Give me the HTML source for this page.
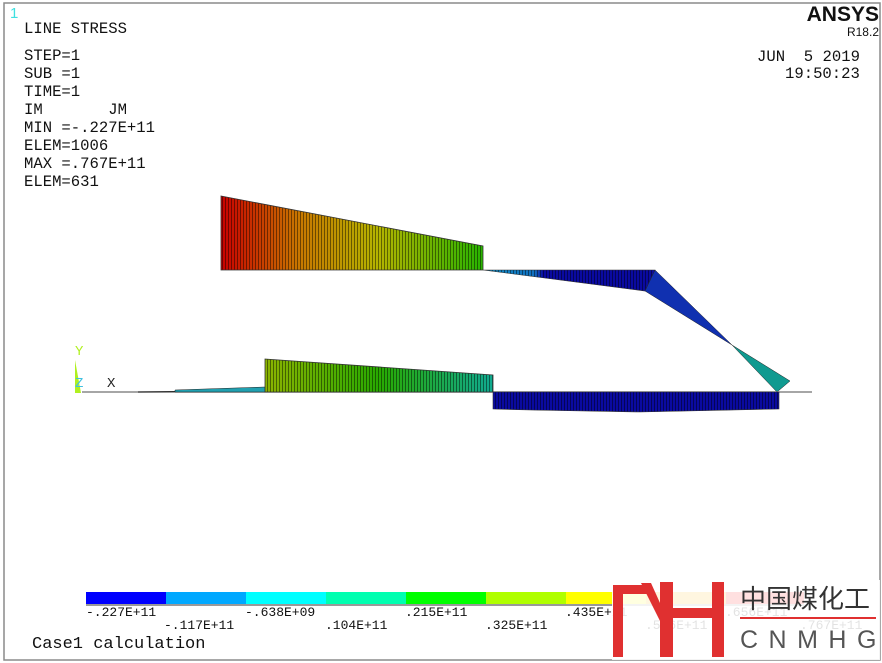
<!DOCTYPE html>
<html><head><meta charset="utf-8"><style>
html,body{margin:0;padding:0;background:#fff;width:882px;height:663px;overflow:hidden}
.m{font-family:"Liberation Mono",monospace;font-size:15.6px;fill:#111}
</style></head><body>
<svg width="882" height="663" viewBox="0 0 882 663" xmlns="http://www.w3.org/2000/svg">
<defs>
<linearGradient id="g1" x1="0" x2="1" y1="0" y2="0">
<stop offset="0" stop-color="#c80000"/><stop offset="0.3" stop-color="#c87800"/><stop offset="0.6" stop-color="#b4b400"/><stop offset="1" stop-color="#28b400"/></linearGradient>
<linearGradient id="g2" x1="0" x2="1"><stop offset="0" stop-color="#1090c8"/><stop offset="0.3" stop-color="#1070c0"/><stop offset="0.35" stop-color="#0a0aa0"/><stop offset="1" stop-color="#0a0aa0"/></linearGradient>
<linearGradient id="g3" x1="0" x2="1"><stop offset="0" stop-color="#8cb400"/><stop offset="0.5" stop-color="#28aa00"/><stop offset="1" stop-color="#10aa90"/></linearGradient>
<pattern id="st" width="3" height="10" patternUnits="userSpaceOnUse"><rect x="0" y="0" width="1" height="10" fill="#000" opacity="0.45"/></pattern>
</defs>
<rect x="4" y="3" width="876" height="657" fill="#fff" stroke="#8a8a8a" stroke-width="1.5"/>
<text x="10" y="18" font-family="Liberation Sans,sans-serif" font-size="15" fill="#40e0e0">1</text>
<g class="m">
<text x="24" y="33">LINE STRESS</text>
<text x="24" y="60">STEP=1</text>
<text x="24" y="78">SUB =1</text>
<text x="24" y="96">TIME=1</text>
<text x="24" y="114">IM&#160;&#160;&#160;&#160;&#160;&#160;&#160;JM</text>
<text x="24" y="132">MIN =-.227E+11</text>
<text x="24" y="150">ELEM=1006</text>
<text x="24" y="168">MAX =.767E+11</text>
<text x="24" y="186">ELEM=631</text>
<text x="757" y="61">JUN&#160;&#160;5 2019</text>
<text x="785" y="78">19:50:23</text>
</g>
<text x="879" y="21" text-anchor="end" font-family="Liberation Sans,sans-serif" font-weight="bold" font-size="21" fill="#111">ANSYS</text>
<text x="879" y="36" text-anchor="end" font-family="Liberation Sans,sans-serif" font-size="12" fill="#111">R18.2</text>
<polygon points="221,196 483,246 483,270 221,270" fill="url(#g1)"/>
<polygon points="221,196 483,246 483,270 221,270" fill="url(#st)" stroke="#333" stroke-width="0.8"/>
<polygon points="483,270 655,270 645,291" fill="url(#g2)"/>
<polygon points="483,270 655,270 645,291" fill="url(#st)" stroke="#333" stroke-width="0.6"/>
<polygon points="655,270 732,345 645,291" fill="#1030b0" stroke="#222" stroke-width="0.5"/>
<polygon points="732,345 790,381 777,392" fill="#109a90" stroke="#222" stroke-width="0.5"/>
<line x1="82" y1="392" x2="812" y2="392" stroke="#888" stroke-width="1.5"/>
<line x1="138" y1="392" x2="220" y2="391" stroke="#222" stroke-width="1"/>
<polygon points="175,392 175,390 265,387 265,392" fill="#20a0b0" stroke="#222" stroke-width="0.5"/>
<polygon points="265,359 493,375 493,392 265,392" fill="url(#g3)"/>
<polygon points="265,359 493,375 493,392 265,392" fill="url(#st)" stroke="#333" stroke-width="0.8"/>
<polygon points="493,392 779,392 779,409 640,412 530,410 493,409" fill="#0a0aa0"/>
<polygon points="493,392 779,392 779,409 640,412 530,410 493,409" fill="url(#st)" stroke="#333" stroke-width="0.6"/>
<polygon points="75,360 81,393 75,393" fill="#b0f020"/>
<text x="75" y="355" font-family="Liberation Mono,monospace" font-size="14" fill="#b0f020">Y</text>
<text x="75" y="387" font-family="Liberation Mono,monospace" font-size="14" fill="#40c0e0">Z</text>
<text x="107" y="387" font-family="Liberation Mono,monospace" font-size="14" fill="#222">X</text>
<g stroke="none">
<rect x="86" y="592" width="80" height="12" fill="#0000ff"/>
<rect x="166" y="592" width="80" height="12" fill="#00a8ff"/>
<rect x="246" y="592" width="80" height="12" fill="#00ffff"/>
<rect x="326" y="592" width="80" height="12" fill="#00ffb0"/>
<rect x="406" y="592" width="80" height="12" fill="#00ff00"/>
<rect x="486" y="592" width="80" height="12" fill="#b0ff00"/>
<rect x="566" y="592" width="80" height="12" fill="#ffff00"/>
<rect x="646" y="592" width="80" height="12" fill="#ffb000"/>
<rect x="726" y="592" width="78" height="12" fill="#ff0000"/>
</g>
<rect x="86" y="604" width="718" height="2" fill="#999"/>
<g font-family="Liberation Mono,monospace" font-size="13" fill="#111">
<text x="86" y="616">-.227E+11</text>
<text x="164" y="629">-.117E+11</text>
<text x="245" y="616">-.638E+09</text>
<text x="325" y="629">.104E+11</text>
<text x="405" y="616">.215E+11</text>
<text x="485" y="629">.325E+11</text>
<text x="565" y="616">.435E+11</text>
<text x="645" y="629">.546E+11</text>
<text x="725" y="616">.656E+11</text>
<text x="800" y="629">.767E+11</text>
</g>
<text x="32" y="648" font-family="Liberation Mono,monospace" font-size="17" fill="#111">Case1 calculation</text>
<rect x="612" y="580" width="268" height="80" fill="#fff" opacity="0.88"/>
<g fill="#e03030">
<rect x="613" y="585" width="10" height="72"/>
<rect x="613" y="585" width="34" height="9"/>
<polygon points="641,583 651,583 669,623 661,623"/>
<rect x="660" y="582" width="13" height="75"/>
<rect x="673" y="608" width="40" height="10"/>
<rect x="712" y="582" width="12" height="75"/>
</g>
<text x="740" y="608" font-family="Noto Sans CJK SC,sans-serif" font-size="26" fill="#333">中国煤化工</text>
<rect x="740" y="617" width="136" height="2" fill="#e03030"/>
<text x="740" y="648" font-family="Liberation Sans,sans-serif" font-size="25" fill="#555" letter-spacing="10.5">CNMHG</text>
</svg>
</body></html>
